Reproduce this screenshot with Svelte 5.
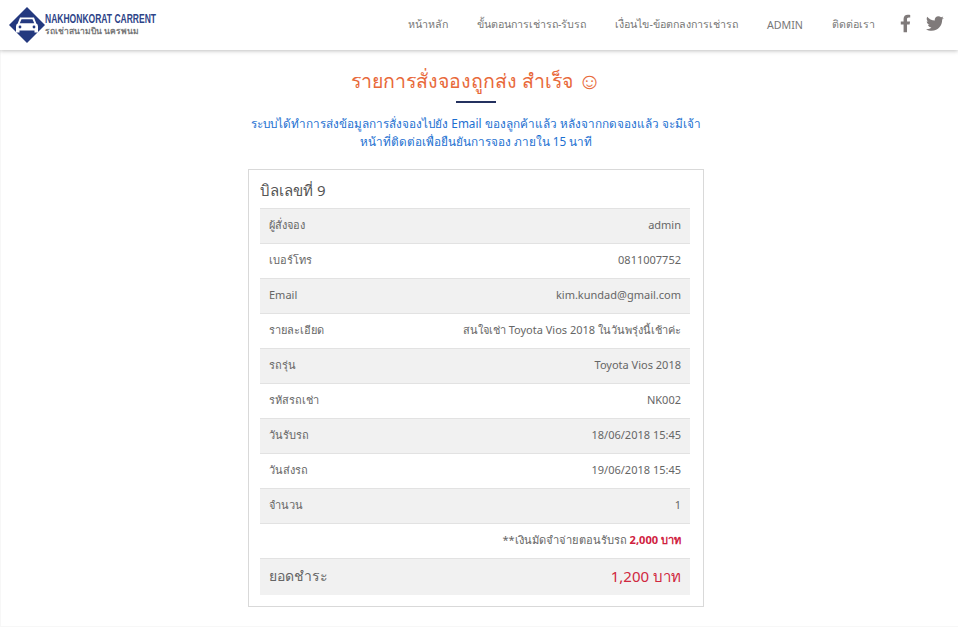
<script>
  const links = ['หน้าหลัก', 'ขั้นตอนการเช่ารถ-รับรถ', 'เงื่อนไข-ข้อตกลงการเช่ารถ', 'ADMIN', 'ติดต่อเรา'];
  const rows = [
    ['ผู้สั่งจอง', 'admin'],
    ['เบอร์โทร', '0811007752'],
    ['Email', 'kim.kundad@gmail.com'],
    ['รายละเอียด', 'สนใจเช่า Toyota Vios 2018 ในวันพรุ่งนี้เช้าค่ะ'],
    ['รถรุ่น', 'Toyota Vios 2018'],
    ['รหัสรถเช่า', 'NK002'],
    ['วันรับรถ', '18/06/2018 15:45'],
    ['วันส่งรถ', '19/06/2018 15:45'],
    ['จำนวน', '1']
  ];
</script>

<header class="nav">
  <div class="logo">
    <svg class="mark" width="36" height="36" viewBox="0 0 36 36" aria-hidden="true">
      <path d="M18 0 L36 18 L18 36 L0 18 Z" fill="#24397f" />
      <path d="M11 10.500 H25 L27.300 16.500 Q29 17.200 29 19.500 V25.500 H25.500 V23.500 H10.500 V25.500 H7 V19.500 Q7 17.200 8.700 16.500 Z" fill="#fff" />
      <path d="M12.500 12.300 H23.500 L25.200 16.300 H10.800 Z" fill="#24397f" />
      <circle cx="11" cy="20" r="1.400" fill="#24397f" />
      <circle cx="25" cy="20" r="1.400" fill="#24397f" />
    </svg>
    <div class="logotext">
      <span class="brand">NAKHONKORAT CARRENT</span>
      <span class="sub">รถเช่าสนามบิน นครพนม</span>
    </div>
  </div>
  <nav class="links">
    {#each links as l}
      <span class="link">{l}</span>
    {/each}
    <span class="social">
      <svg width="11" height="19" viewBox="0 0 320 512" aria-hidden="true"><path fill="#7f7a7a" d="M279 288l14-93h-89v-60c0-25 12-50 52-50h41V6s-37-6-72-6c-73 0-121 44-121 125v70H23v93h81v224h100V288z" /></svg>
      <svg width="18" height="15" viewBox="0 0 512 416" aria-hidden="true"><path fill="#7f7a7a" d="M459 104c.3 4.500.3 9 .3 13.600C459.300 256.300 353.700 416 161 416c-59 0-114-17-161-47 8.400 1 16.500 1.300 25.200 1.300 49 0 94-16.600 130-45-46-1-84.600-31-98-72.800 6.500 1 13 1.600 19.800 1.600 9.400 0 19-1.300 27.800-3.600-48-9.700-84-52-84-103v-1.300c14 7.800 30 12.600 47.500 13.300C39 140 20 107 20 70c0-20 5.200-38 14.600-54C86.200 79.700 163.700 121.300 250.500 126c-1.600-7.800-2.600-16-2.600-24 0-56.500 45.800-102 102.600-102 29.500 0 56 12.300 75 32.500 23-4.500 45.500-13.300 65-25-7.600 24-23.500 44-44.500 56.700 20.600-2.300 40.600-8 59-16-14 20.300-31.500 38.500-51.600 53z" /></svg>
    </span>
  </nav>
</header>

<main class="page">
  <h1 class="title">รายการสั่งจองถูกส่ง สำเร็จ <span class="smile">☺</span></h1>
  <div class="rule"></div>
  <p class="lead">ระบบได้ทำการส่งข้อมูลการสั่งจองไปยัง Email ของลูกค้าแล้ว หลังจากกดจองแล้ว จะมีเจ้า<br />หน้าที่ติดต่อเพื่อยืนยันการจอง ภายใน 15 นาที</p>

  <section class="card">
    <h2 class="bill">บิลเลขที่ 9</h2>
    {#each rows as r, i}
      <div class="row" class:odd={i % 2 === 0}>
        <span>{r[0]}</span>
        <span>{r[1]}</span>
      </div>
    {/each}
    <div class="row note">
      <span>**เงินมัดจำจ่ายตอนรับรถ <b>2,000 บาท</b></span>
    </div>
    <div class="row total">
      <span>ยอดชำระ</span>
      <span class="amount">1,200 บาท</span>
    </div>
  </section>
</main>

<style>
  :global(body) {
    margin: 0;
    background: #fff;
    font-family: "Noto Sans", "Open Sans", "Noto Sans CJK SC", sans-serif;
    color: #555;
  }
  .nav {
    position: relative;
    height: 50px;
    box-sizing: border-box;
    display: flex;
    align-items: center;
    justify-content: space-between;
    padding: 0 14px 1px 9px;
    background: #fff;
    box-shadow: 0 1px 4px rgba(0, 0, 0, 0.25);
  }
  .logo { display: flex; align-items: center; gap: 0; }
  .mark { display: block; }
  .logotext { display: flex; flex-direction: column; line-height: 11px; margin-top: 1px; }
  .brand {
    font-family: "Liberation Sans", sans-serif;
    font-size: 12px;
    font-weight: 700;
    color: #2d4488;
    white-space: nowrap;
    transform: scaleX(0.71);
    transform-origin: left center;
  }
  .sub { font-size: 8.500px; font-weight: 700; color: #777; white-space: nowrap; }
  .links { display: flex; align-items: center; gap: 29px; font-size: 10.700px; color: #777; }
  .link { white-space: nowrap; }
  .social { display: flex; align-items: center; gap: 15px; margin: -3px 0 0 -4px; }
  .social svg { display: block; }
  .page {
    box-sizing: border-box;
    min-height: 577px;
    display: flex;
    flex-direction: column;
    align-items: center;
    padding-right: 7px;
    border-left: 1px solid #f7f7f7;
    border-bottom: 1px solid #f7f7f7;
  }
  .title {
    margin: 17px 0 0;
    font-size: 19.500px;
    line-height: 27px;
    font-weight: 400;
    color: #e8693a;
  }
  .smile { font-size: 23px; line-height: 20px; vertical-align: -1px; }
  .rule { width: 40px; height: 2px; margin-top: 7px; background: #24315f; }
  .lead {
    width: 470px;
    margin: 11px 0 0;
    font-size: 11.750px;
    line-height: 18px;
    text-align: center;
    color: #1b6fd1;
  }
  .card {
    box-sizing: border-box;
    width: 456px;
    margin-top: 19px;
    padding: 0 13px 11px 11px;
    border: 1px solid #d9d9d9;
    background: #fff;
  }
  .bill {
    margin: 0;
    height: 38px;
    font-size: 15px;
    line-height: 40px;
    font-weight: 400;
    color: #555;
  }
  .row {
    box-sizing: border-box;
    display: flex;
    justify-content: space-between;
    align-items: center;
    height: 35px;
    padding: 0 9px 2px;
    border-top: 1px solid #e2e2e2;
    font-size: 11px;
    line-height: 16px;
    color: #666;
  }
  .odd { background: #f1f1f1; }
  .note { justify-content: flex-end; font-size: 11.100px; }
  .note b { color: #d0213f; font-weight: 700; }
  .total { height: 37px; background: #f1f1f1; font-size: 14px; }
  .amount { color: #d0283f; font-size: 15px; }
</style>
